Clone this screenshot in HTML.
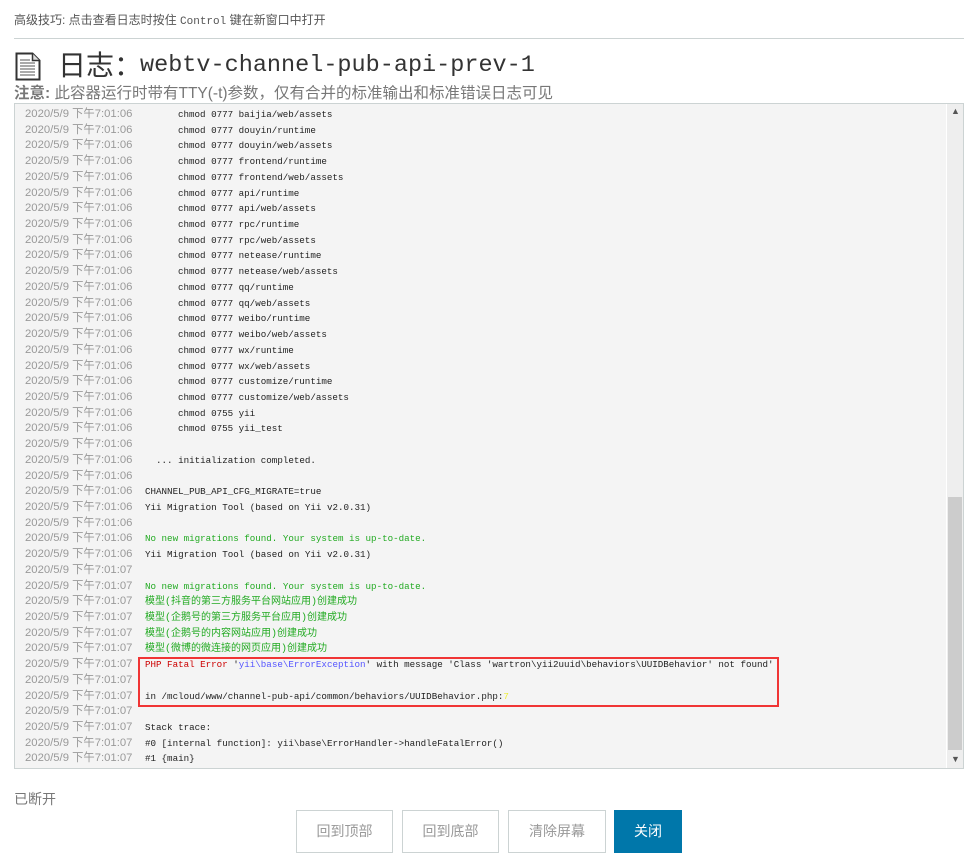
<!DOCTYPE html>
<html><head><meta charset="utf-8">
<style>
*{margin:0;padding:0;box-sizing:border-box}
body{width:979px;height:865px;background:#fff;position:relative;overflow:hidden;font-family:"Liberation Sans","Noto Sans CJK SC",sans-serif;color:#555}
.tip{position:absolute;left:14px;top:11px;font-size:12px;color:#555}
.tip .m{font-family:"Liberation Mono","Noto Sans CJK SC",monospace;font-size:11px}
.hr{position:absolute;left:14px;top:38px;width:950px;height:1px;background:#ccd3d3}
.title{position:absolute;left:58px;top:48px;font-size:28px;color:#333;white-space:nowrap;line-height:36px}
.title .m{position:absolute;left:82px;top:0;font-family:"Liberation Mono",monospace;font-size:23.5px;color:#333}
.note{position:absolute;left:14px;top:81px;font-size:15.5px;color:#777;white-space:nowrap}
.note b{color:#777}
.box{position:absolute;left:14px;top:103px;width:950px;height:666px;background:#f4f4f4;border:1px solid #ccd3d3;overflow:hidden}
.lines{position:absolute;left:10px;top:3px}
.l{height:15.73px;line-height:15.73px;white-space:pre;font-size:9.2px;font-family:"Liberation Mono","Noto Sans CJK SC",monospace;color:#222}
.l .c{font-size:10px}
.l .t{display:inline-block;width:120px;color:#999;font-family:"Liberation Sans","Noto Sans CJK SC",sans-serif;font-size:11.3px;vertical-align:top}
.ind{padding-left:33px}
.g{color:#2a2}
.r{color:#c00}
.b{color:#55f}
.y{color:#ee3}
.sb{position:absolute;right:0;top:0;width:17px;height:664px;background:#eee;border-left:1px solid #fff}
.th{position:absolute;left:1px;right:1px;top:393px;height:253px;background:#ccc}
.ar{position:absolute;left:4px;font-size:9px;color:#555}
.red{position:absolute;left:138px;top:657px;width:641px;height:50px;border:2px solid #f03535}
.st{position:absolute;left:14px;top:789px;font-size:14px;color:#777}
.btn{position:absolute;top:810px;height:43px;border:1px solid #ccd3d3;background:#fff;color:#999;font-size:14px;text-align:center;line-height:41px}
.pri{background:#0077aa;border-color:#0077aa;color:#fff}
</style></head><body>
<div class="tip">高级技巧: 点击查看日志时按住 <span class="m">Control</span> 键在新窗口中打开</div>
<div class="hr"></div>
<svg style="position:absolute;left:15px;top:52px" width="26" height="29" viewBox="0 0 26 29">
<path d="M1.5 1.5h16l7 7v19h-23z" fill="#fff" stroke="#333" stroke-width="2"/>
<path d="M17.5 1.5v7h7" fill="#ddd" stroke="#333" stroke-width="1.5"/>
<g stroke="#555" stroke-width="1"><path d="M5 8h10M5 11h15M5 14h15M5 17h15M5 20h15M5 23h15"/></g>
</svg>
<div class="title">日志：<span class="m">webtv-channel-pub-api-prev-1</span></div>
<div class="note"><b>注意:</b> 此容器运行时带有TTY(-t)参数，仅有合并的标准输出和标准错误日志可见</div>
<div class="box">
<div class="lines">
<div class="l"><span class="t">2020/5/9 下午7:01:06</span><span class="ind">chmod 0777 baijia/web/assets</span></div>
<div class="l"><span class="t">2020/5/9 下午7:01:06</span><span class="ind">chmod 0777 douyin/runtime</span></div>
<div class="l"><span class="t">2020/5/9 下午7:01:06</span><span class="ind">chmod 0777 douyin/web/assets</span></div>
<div class="l"><span class="t">2020/5/9 下午7:01:06</span><span class="ind">chmod 0777 frontend/runtime</span></div>
<div class="l"><span class="t">2020/5/9 下午7:01:06</span><span class="ind">chmod 0777 frontend/web/assets</span></div>
<div class="l"><span class="t">2020/5/9 下午7:01:06</span><span class="ind">chmod 0777 api/runtime</span></div>
<div class="l"><span class="t">2020/5/9 下午7:01:06</span><span class="ind">chmod 0777 api/web/assets</span></div>
<div class="l"><span class="t">2020/5/9 下午7:01:06</span><span class="ind">chmod 0777 rpc/runtime</span></div>
<div class="l"><span class="t">2020/5/9 下午7:01:06</span><span class="ind">chmod 0777 rpc/web/assets</span></div>
<div class="l"><span class="t">2020/5/9 下午7:01:06</span><span class="ind">chmod 0777 netease/runtime</span></div>
<div class="l"><span class="t">2020/5/9 下午7:01:06</span><span class="ind">chmod 0777 netease/web/assets</span></div>
<div class="l"><span class="t">2020/5/9 下午7:01:06</span><span class="ind">chmod 0777 qq/runtime</span></div>
<div class="l"><span class="t">2020/5/9 下午7:01:06</span><span class="ind">chmod 0777 qq/web/assets</span></div>
<div class="l"><span class="t">2020/5/9 下午7:01:06</span><span class="ind">chmod 0777 weibo/runtime</span></div>
<div class="l"><span class="t">2020/5/9 下午7:01:06</span><span class="ind">chmod 0777 weibo/web/assets</span></div>
<div class="l"><span class="t">2020/5/9 下午7:01:06</span><span class="ind">chmod 0777 wx/runtime</span></div>
<div class="l"><span class="t">2020/5/9 下午7:01:06</span><span class="ind">chmod 0777 wx/web/assets</span></div>
<div class="l"><span class="t">2020/5/9 下午7:01:06</span><span class="ind">chmod 0777 customize/runtime</span></div>
<div class="l"><span class="t">2020/5/9 下午7:01:06</span><span class="ind">chmod 0777 customize/web/assets</span></div>
<div class="l"><span class="t">2020/5/9 下午7:01:06</span><span class="ind">chmod 0755 yii</span></div>
<div class="l"><span class="t">2020/5/9 下午7:01:06</span><span class="ind">chmod 0755 yii_test</span></div>
<div class="l"><span class="t">2020/5/9 下午7:01:06</span></div>
<div class="l"><span class="t">2020/5/9 下午7:01:06</span>  ... initialization completed.</div>
<div class="l"><span class="t">2020/5/9 下午7:01:06</span></div>
<div class="l"><span class="t">2020/5/9 下午7:01:06</span>CHANNEL_PUB_API_CFG_MIGRATE=true</div>
<div class="l"><span class="t">2020/5/9 下午7:01:06</span>Yii Migration Tool (based on Yii v2.0.31)</div>
<div class="l"><span class="t">2020/5/9 下午7:01:06</span></div>
<div class="l"><span class="t">2020/5/9 下午7:01:06</span><span class="g">No new migrations found. Your system is up-to-date.</span></div>
<div class="l"><span class="t">2020/5/9 下午7:01:06</span>Yii Migration Tool (based on Yii v2.0.31)</div>
<div class="l"><span class="t">2020/5/9 下午7:01:07</span></div>
<div class="l"><span class="t">2020/5/9 下午7:01:07</span><span class="g">No new migrations found. Your system is up-to-date.</span></div>
<div class="l"><span class="t">2020/5/9 下午7:01:07</span><span class="g c">模型(抖音的第三方服务平台网站应用)创建成功</span></div>
<div class="l"><span class="t">2020/5/9 下午7:01:07</span><span class="g c">模型(企鹅号的第三方服务平台应用)创建成功</span></div>
<div class="l"><span class="t">2020/5/9 下午7:01:07</span><span class="g c">模型(企鹅号的内容网站应用)创建成功</span></div>
<div class="l"><span class="t">2020/5/9 下午7:01:07</span><span class="g c">模型(微博的微连接的网页应用)创建成功</span></div>
<div class="l"><span class="t">2020/5/9 下午7:01:07</span><span class="r">PHP Fatal Error</span> '<span class="b">yii\base\ErrorException</span>' with message 'Class 'wartron\yii2uuid\behaviors\UUIDBehavior' not found'</div>
<div class="l"><span class="t">2020/5/9 下午7:01:07</span></div>
<div class="l"><span class="t">2020/5/9 下午7:01:07</span>in /mcloud/www/channel-pub-api/common/behaviors/UUIDBehavior.php:<span class="y">7</span></div>
<div class="l"><span class="t">2020/5/9 下午7:01:07</span></div>
<div class="l"><span class="t">2020/5/9 下午7:01:07</span>Stack trace:</div>
<div class="l"><span class="t">2020/5/9 下午7:01:07</span>#0 [internal function]: yii\base\ErrorHandler-&gt;handleFatalError()</div>
<div class="l"><span class="t">2020/5/9 下午7:01:07</span>#1 {main}</div>
</div>
<div class="sb"><div class="ar" style="top:2px">&#x25B2;</div><div class="th"></div><div class="ar" style="top:650px">&#x25BC;</div></div>
</div>
<div class="red"></div>
<div class="st">已断开</div>
<div class="btn" style="left:296px;width:97px">回到顶部</div>
<div class="btn" style="left:402px;width:97px">回到底部</div>
<div class="btn" style="left:508px;width:98px">清除屏幕</div>
<div class="btn pri" style="left:614px;width:68px">关闭</div>
</body></html>
